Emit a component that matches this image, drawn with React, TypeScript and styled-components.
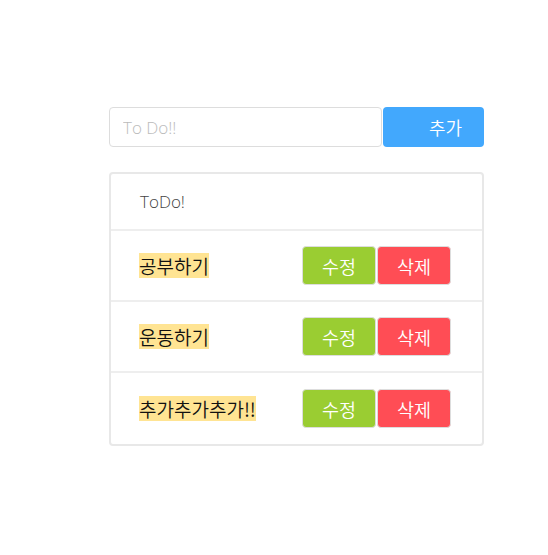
import React from "react";
import styled, { createGlobalStyle } from "styled-components";

const Global = createGlobalStyle`
  html, body { margin: 0; padding: 0; background: #fff; }
  body { font-family: "Noto Sans CJK KR", "Noto Sans", sans-serif; }
  * { box-sizing: border-box; }
`;

const Page = styled.div`
  width: 548px;
  height: 555px;
  padding: 107px 0 0 109px;
`;

const Wrap = styled.div`
  width: 375px;
  display: flex;
  flex-direction: column;
  gap: 25px;
`;

const Form = styled.form`
  display: flex;
  height: 40px;
`;

const Input = styled.input`
  flex: 1;
  height: 40px;
  border: 1px solid #ddd;
  border-radius: 4px;
  padding: 0 13px;
  font-family: "Open Sans", "Noto Sans CJK KR", sans-serif;
  font-size: 17px;
  color: #333;
  outline: none;
  &::placeholder { color: #bbb; font-weight: 300; }
`;

const AddButton = styled.button`
  width: 101px;
  height: 40px;
  margin-left: 1px;
  border: none;
  border-radius: 4px;
  background: #42a8fd;
  color: #fff;
  font-family: "Noto Sans CJK KR", sans-serif;
  font-weight: 350;
  font-size: 18px;
  padding: 0 0 0 24px;
`;

const Card = styled.div`
  border: 2px solid #e8e8e8;
  border-radius: 4px;
  display: flex;
  flex-direction: column;
`;

const Header = styled.div`
  height: 57px;
  padding-left: 29px;
  display: flex;
  align-items: center;
  font-family: "Open Sans", sans-serif;
  font-weight: 300;
  font-size: 17px;
  color: #444;
  border-bottom: 2px solid #eee;
`;

const Row = styled.div<{ $last?: boolean }>`
  height: 71px;
  padding: 0 31px 0 28px;
  display: flex;
  align-items: center;
  gap: 1px;
  border-bottom: ${(p) => (p.$last ? "none" : "2px solid #eee")};
`;

const Label = styled.span`
  background: #ffe493;
  font-size: 19px;
  font-weight: 350;
  line-height: 25px;
  color: #111;
  margin-right: auto;
`;

const Act = styled.button<{ $color: string }>`
  width: 74px;
  height: 39px;
  border: 1px solid #ddd;
  border-radius: 4px;
  background: ${(p) => p.$color};
  color: #fff;
  font-family: "Noto Sans CJK KR", sans-serif;
  font-weight: 350;
  font-size: 18.5px;
  padding: 0;
`;

const items = ["공부하기", "운동하기", "추가추가추가!!"];

export default function App() {
  return (
    <Page>
      <Global />
      <Wrap>
        <Form onSubmit={(e) => e.preventDefault()}>
          <Input placeholder="To Do!!" />
          <AddButton type="submit">추가</AddButton>
        </Form>
        <Card>
          <Header>ToDo!</Header>
          {items.map((t, i) => (
            <Row key={t} $last={i === items.length - 1}>
              <Label>{t}</Label>
              <Act $color="#9acd32">수정</Act>
              <Act $color="#ff4d55">삭제</Act>
            </Row>
          ))}
        </Card>
      </Wrap>
    </Page>
  );
}
